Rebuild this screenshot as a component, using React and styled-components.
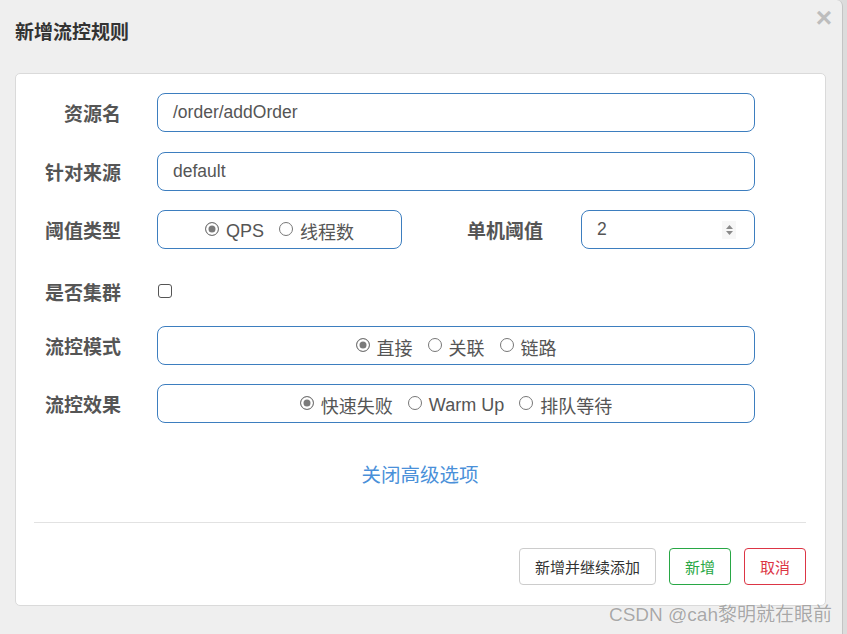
import React from 'react';
import styled, { createGlobalStyle } from 'styled-components';

const GlobalStyle = createGlobalStyle`
  html, body {
    margin: 0;
    padding: 0;
    background: #dcdcdc;
  }
  body {
    font-family: "Liberation Sans", "Noto Sans CJK SC", sans-serif;
  }
`;

class App extends React.Component {
  render() {
    return (
      <Page>
        <GlobalStyle />
        <Dialog>
          <Header>
            <Title>新增流控规则</Title>
            <Close>×</Close>
          </Header>
          <Card>
            <Row $mt={0}>
              <Label>资源名</Label>
              <Input>/order/addOrder</Input>
            </Row>
            <Row $mt={20}>
              <Label>针对来源</Label>
              <Input>default</Input>
            </Row>
            <Row $mt={19}>
              <Label>阈值类型</Label>
              <SplitRow>
                <RadioBox>
                  <Radio checked label="QPS" />
                  <Radio label="线程数" />
                </RadioBox>
                <SideLabel>单机阈值</SideLabel>
                <NumberInput>
                  <span>2</span>
                  <Spinner>
                    <svg width="9" height="12" viewBox="0 0 9 12">
                      <path d="M4.5 1 L8 5 L1 5 Z" fill="#8a8a8a" />
                      <path d="M4.5 11 L8 7 L1 7 Z" fill="#8a8a8a" />
                    </svg>
                  </Spinner>
                </NumberInput>
              </SplitRow>
            </Row>
            <Row $mt={22} $h={40}>
              <Label>是否集群</Label>
              <Checkbox />
            </Row>
            <Row $mt={15}>
              <Label>流控模式</Label>
              <RadioBox $wide>
                <Radio checked label="直接" />
                <Radio label="关联" />
                <Radio label="链路" />
              </RadioBox>
            </Row>
            <Row $mt={19}>
              <Label>流控效果</Label>
              <RadioBox $wide>
                <Radio checked label="快速失败" />
                <Radio label="Warm Up" />
                <Radio label="排队等待" />
              </RadioBox>
            </Row>
            <LinkRow>
              <Link>关闭高级选项</Link>
            </LinkRow>
            <Divider />
            <Footer>
              <Button>新增并继续添加</Button>
              <Button $color="#28a745">新增</Button>
              <Button $color="#dc3545">取消</Button>
            </Footer>
          </Card>
        </Dialog>
        <Watermark>CSDN @cah黎明就在眼前</Watermark>
      </Page>
    );
  }
}

const Radio = ({ checked, label }) => (
  <RadioItem>
    <RadioCircle $checked={checked} />
    <span>{label}</span>
  </RadioItem>
);

const Page = styled.div`
  position: relative;
  width: 847px;
  height: 634px;
  overflow: hidden;
`;

const Dialog = styled.div`
  width: 843px;
  height: 634px;
  box-sizing: border-box;
  background: #efefef;
  border-right: 1px solid #c4c4c4;
  border-top-right-radius: 6px;
  padding: 0 0 0 15px;
`;

const Header = styled.div`
  display: flex;
  align-items: flex-start;
  justify-content: space-between;
  height: 73px;
  padding-right: 10px;
`;

const Title = styled.h4`
  margin: 21px 0 0 0;
  font-size: 19px;
  line-height: 24px;
  font-weight: 700;
  color: #333;
`;

const Close = styled.div`
  margin-top: 3px;
  font-family: "Liberation Sans", sans-serif;
  font-size: 28px;
  line-height: 30px;
  font-weight: 700;
  color: #bdbdbd;
`;

const Card = styled.div`
  width: 811px;
  box-sizing: border-box;
  background: #fff;
  border: 1px solid #dadada;
  border-radius: 5px;
  padding: 19px 19px 20px 18px;
`;

const Row = styled.div`
  display: flex;
  align-items: center;
  height: ${p => p.$h || 39}px;
  margin-top: ${p => p.$mt}px;
`;

const Label = styled.div`
  width: 87px;
  margin-right: 36px;
  text-align: right;
  font-size: 19px;
  font-weight: 700;
  color: #555;
  white-space: nowrap;
`;

const Input = styled.div`
  width: 598px;
  height: 39px;
  box-sizing: border-box;
  display: flex;
  align-items: center;
  padding-left: 15px;
  border: 1px solid #3d7ebf;
  border-radius: 8px;
  font-size: 17.5px;
  color: #555;
`;

const SplitRow = styled.div`
  display: flex;
  align-items: center;
  width: 598px;
`;

const RadioBox = styled.div`
  width: ${p => (p.$wide ? 598 : 245)}px;
  height: 39px;
  box-sizing: border-box;
  display: flex;
  align-items: center;
  justify-content: center;
  gap: 15px;
  border: 1px solid #3d7ebf;
  border-radius: 8px;
  padding-top: 3px;
`;

const RadioItem = styled.label`
  display: flex;
  align-items: center;
  gap: 7px;
  font-size: 18px;
  color: #555;
  white-space: nowrap;
`;

const RadioCircle = styled.span`
  flex-shrink: 0;
  width: 14px;
  height: 14px;
  box-sizing: border-box;
  border-radius: 50%;
  border: 1px solid #777;
  margin-top: -4px;
  background: ${p => (p.$checked ? '#7a7a7a' : '#fff')};
  box-shadow: ${p => (p.$checked ? 'inset 0 0 0 2.5px #fff' : 'none')};
`;

const SideLabel = styled.div`
  width: 141px;
  margin-right: 38px;
  text-align: right;
  font-size: 19px;
  font-weight: 700;
  color: #555;
  white-space: nowrap;
`;

const NumberInput = styled.div`
  width: 174px;
  height: 39px;
  box-sizing: border-box;
  display: flex;
  align-items: center;
  justify-content: space-between;
  padding: 0 18px 0 15px;
  border: 1px solid #3d7ebf;
  border-radius: 8px;
  font-size: 17.5px;
  color: #555;
`;

const Spinner = styled.div`
  display: flex;
  align-items: center;
  justify-content: center;
  width: 14px;
  height: 18px;
  background: #f7f7f7;
`;

const Checkbox = styled.span`
  width: 14px;
  height: 14px;
  box-sizing: border-box;
  border: 1px solid #555;
  border-radius: 3px;
  margin-left: 1px;
`;

const LinkRow = styled.div`
  display: flex;
  justify-content: center;
  margin-top: 39px;
`;

const Link = styled.a`
  font-size: 19.5px;
  line-height: 27px;
  color: #4a90d9;
  cursor: pointer;
`;

const Divider = styled.div`
  height: 1px;
  background: #e2e2e2;
  margin-top: 33px;
`;

const Footer = styled.div`
  display: flex;
  justify-content: flex-end;
  gap: 13px;
  margin-top: 25px;
`;

const Button = styled.button`
  height: 37px;
  padding: 0 15px;
  background: #fff;
  border: 1px solid ${p => (p.$color ? p.$color : '#cccccc')};
  border-radius: 4px;
  font-family: "Liberation Sans", "Noto Sans CJK SC", sans-serif;
  font-size: 15px;
  color: ${p => (p.$color ? p.$color : '#333')};
`;

const Watermark = styled.div`
  position: absolute;
  right: 15px;
  bottom: 7px;
  font-size: 19px;
  line-height: 24px;
  color: rgba(110, 110, 110, 0.6);
  text-shadow: 0 0 1px #fff;
  white-space: nowrap;
`;

export default App;
